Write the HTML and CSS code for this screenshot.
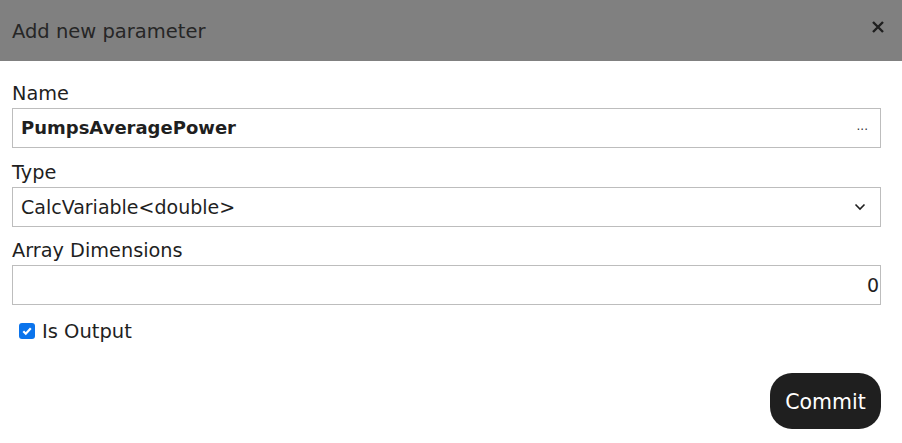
FILE: index.html
```html
<!DOCTYPE html>
<html>
<head>
<meta charset="utf-8">
<link rel="stylesheet" href="styles.css">
</head>
<body>
<div class="dialog">
  <div class="header">
    <span class="title">Add new parameter</span>
    <span class="close" aria-label="Close">
      <svg width="14" height="14" viewBox="0 0 14 14"><path d="M2 2 L12 12 M12 2 L2 12" stroke="#1f1f1f" stroke-width="2.4" stroke-linecap="butt"/></svg>
    </span>
  </div>
  <div class="body">
    <div class="field">
      <label class="label">Name</label>
      <div class="input name-input">
        <span class="value bold">PumpsAveragePower</span>
        <span class="dots">...</span>
      </div>
    </div>
    <div class="field">
      <label class="label">Type</label>
      <div class="input">
        <span class="value">CalcVariable&lt;double&gt;</span>
        <svg class="chevron" width="12" height="8" viewBox="0 0 12 8"><path d="M1.5 1.5 L6 6 L10.5 1.5" fill="none" stroke="#1f1f1f" stroke-width="1.6"/></svg>
      </div>
    </div>
    <div class="field">
      <label class="label">Array Dimensions</label>
      <div class="input num">
        <span class="value">0</span>
      </div>
    </div>
    <div class="check-row">
      <span class="checkbox">
        <svg width="12" height="12" viewBox="0 0 12 12"><path d="M2.3 6.2 L4.8 8.7 L9.8 3.3" fill="none" stroke="#fff" stroke-width="2.2"/></svg>
      </span>
      <span class="check-label">Is Output</span>
    </div>
    <div class="actions">
      <button class="commit">Commit</button>
    </div>
  </div>
</div>
</body>
</html>
```
FILE: styles.css
```css
* { box-sizing: border-box; }
html, body { margin: 0; padding: 0; background: #fff; }
body {
  font-family: "DejaVu Sans", "Noto Sans", sans-serif;
  color: #1f1f1f;
  width: 902px;
  height: 443px;
  overflow: hidden;
}
.header {
  height: 61px;
  background: #808080;
  display: flex;
  align-items: center;
  justify-content: space-between;
  padding: 0 17px 0 12px;
}
.title {
  font-size: 19.5px;
  color: #262626;
  margin-top: 1px;
}
.close { display: flex; margin-top: -7px; }
.body {
  padding: 19px 21px 0 12px;
}
.field { margin-bottom: 10.5px; }
.label {
  display: block;
  font-size: 19.3px;
  line-height: 24px;
  padding-top: 2px;
  margin-bottom: 2px;
}
.input {
  height: 40px;
  border: 1px solid #bdbdbd;
  display: flex;
  align-items: center;
  justify-content: space-between;
  padding: 0 12px 0 8px;
  font-size: 19px;
  line-height: 24px;
}
.bold { font-weight: 700; font-size: 18px; }
.dots { font-size: 12px; margin-top: -4px; color: #333; }
.chevron { margin-right: 2px; }
.num { justify-content: flex-end; padding-right: 0; }
.num .value { margin-right: 1px; }
.check-row {
  display: flex;
  align-items: center;
  padding-left: 7px;
  margin-top: 14px;
  height: 24px;
}
.checkbox {
  width: 16px; height: 16px;
  background: #0b74ec;
  border-radius: 3px;
  display: flex; align-items: center; justify-content: center;
  margin-right: 7px;
}
.check-label { font-size: 19.5px; }
.actions {
  display: flex;
  justify-content: flex-end;
  margin-top: 30px;
}
.commit {
  width: 111px;
  height: 56px;
  border: none;
  border-radius: 22px;
  background: #1f1f1f;
  color: #fff;
  font-family: inherit;
  font-size: 20.5px;
  font-weight: 500;
  padding: 2px 0 0;
}
```
